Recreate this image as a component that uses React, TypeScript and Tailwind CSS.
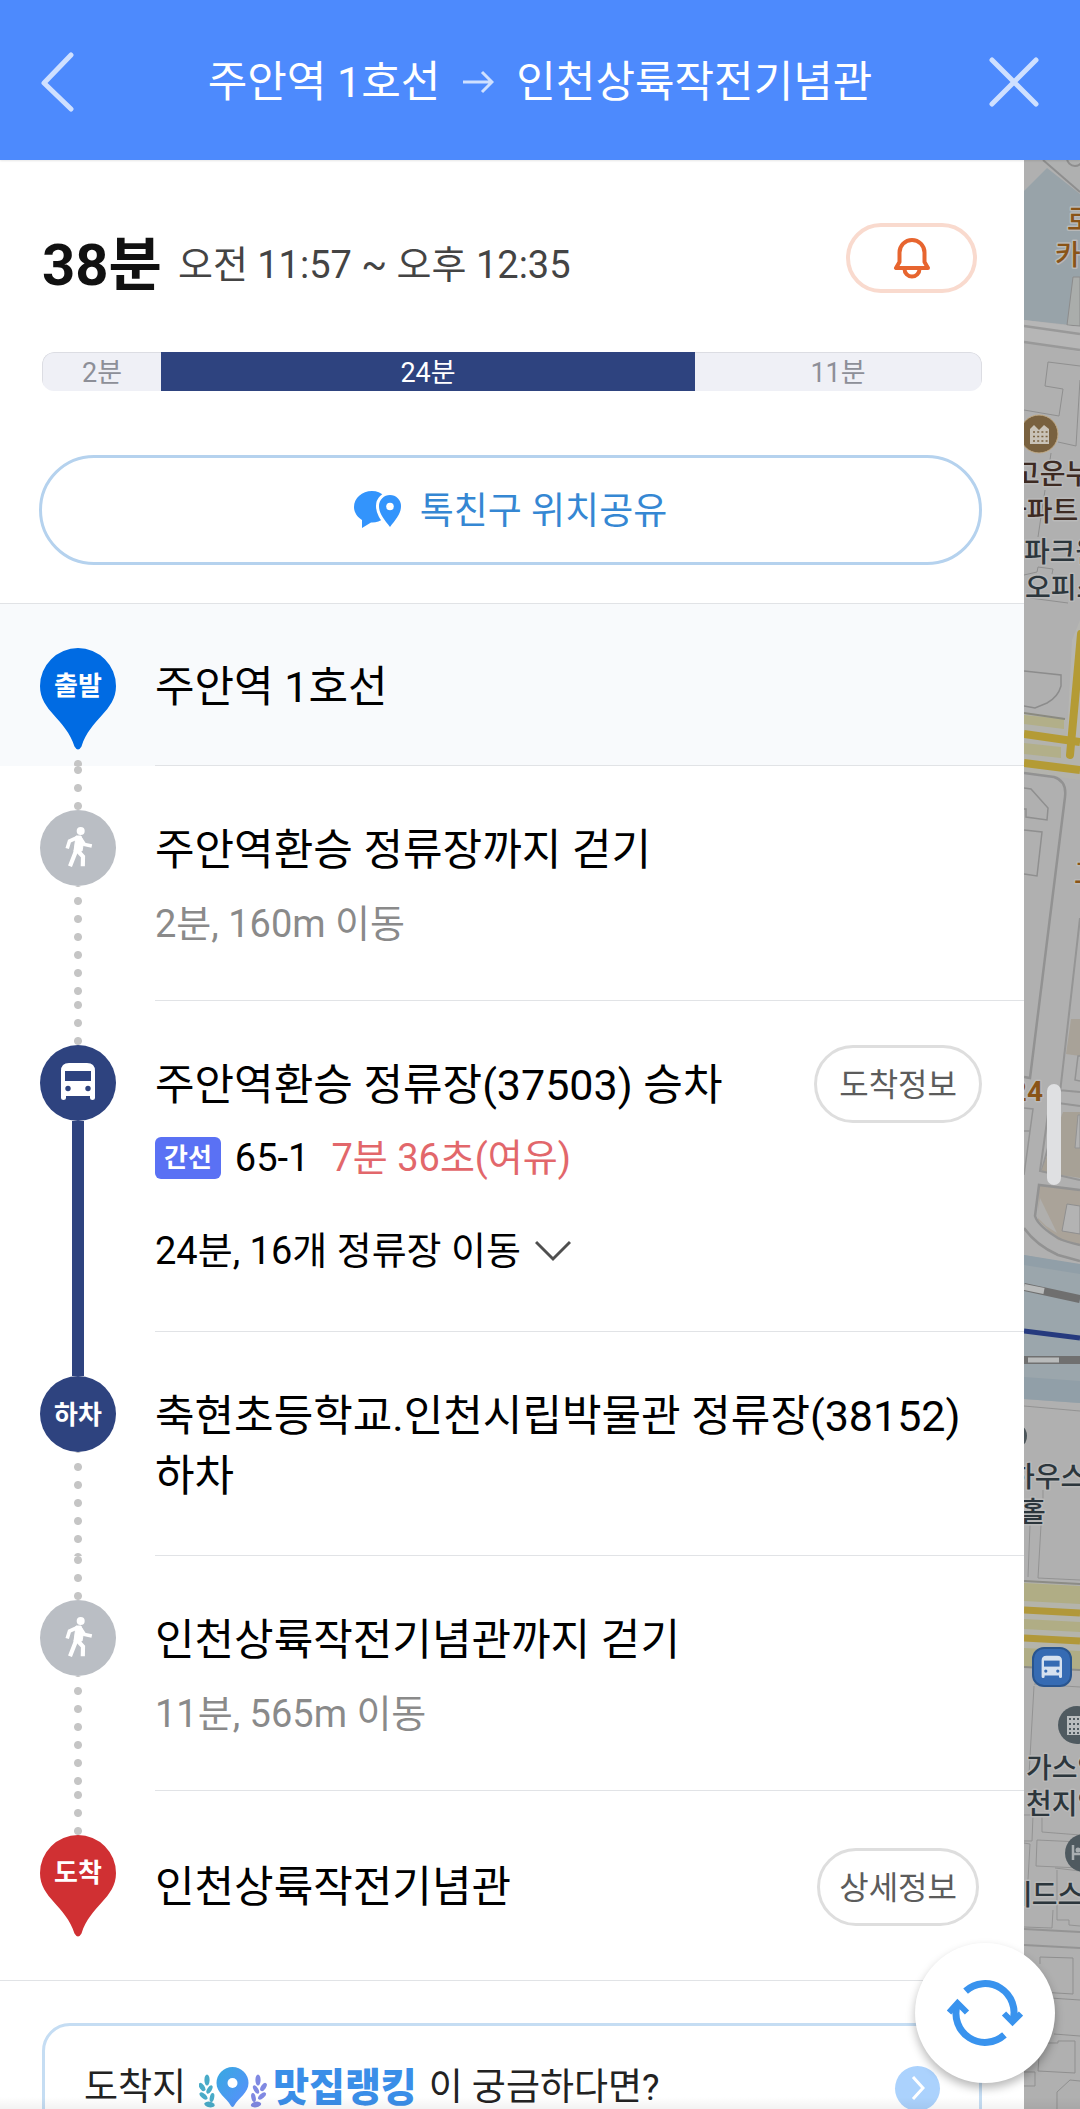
import React from 'react';

function WalkIcon() {
  return (
    <svg viewBox="0 0 76 76" className="size-[76px]" fill="none" stroke="#fff">
      <circle cx="40.7" cy="21" r="4" fill="#fff" stroke="none" />
      <path d="M36 26 h5 l2.5 7 l-1.5 8 h-8 z" fill="#fff" strokeWidth="1" />
      <path d="M27.2 38.5 L29.5 31 L37.5 27.5 M40.5 28.5 L44.5 34.5 L51.8 36" strokeWidth="3.6" />
      <path d="M36.5 38 L35 43.5 L30 56.2" strokeWidth="4.2" />
      <path d="M36.5 39.5 L43 46.5 L42.8 56.2" strokeWidth="4.2" />
    </svg>
  );
}

function BusShape({ cutout }: { cutout: string }) {
  return (
    <>
      <path
        d="M21 26 Q21 18 29 18 H47 Q55 18 55 26 V53 Q55 55 52.5 55 Q50 55 50 53 V51 H26 V53 Q26 55 23.5 55 Q21 55 21 53 Z"
        fill="#fff"
      />
      <rect x="25" y="26" width="26" height="10" fill={cutout} />
      <circle cx="28" cy="43.5" r="2.7" fill={cutout} />
      <circle cx="48" cy="43.5" r="2.7" fill={cutout} />
    </>
  );
}

function PinMarker({ label, color }: { label: string; color: string }) {
  return (
    <div className="relative h-[102px] w-[76px]">
      <svg viewBox="0 0 76 102" className="size-full">
        <path
          d="M38 0 A38 38 0 0 1 76 38 C76 63 50 71 41.5 98.5 Q38 104.5 34.5 98.5 C26 71 0 63 0 38 A38 38 0 0 1 38 0 Z"
          fill={color}
        />
      </svg>
      <span className="absolute inset-x-0 top-0 text-center text-[26px] leading-[76px] font-bold text-white">{label}</span>
    </div>
  );
}

type StepProps = {
  marker: React.ReactNode;
  before?: boolean;
  after?: 'dots' | 'tail' | 'bus';
  className?: string;
  bodyClass?: string;
  children: React.ReactNode;
};

const dots = 'w-2 bg-[radial-gradient(circle_at_4px_4px,#c5c5c5_3.5px,transparent_4.5px)] bg-[length:8px_18px] bg-repeat-y';

function Step({ marker, before = false, after, className = '', bodyClass = '', children }: StepProps) {
  return (
    <li className={`flex ${className}`}>
      <div className="flex w-[155px] shrink-0 flex-col items-center pr-[39px] pl-10">
        <div className={`h-11 shrink-0 ${before ? dots : ''}`} />
        {marker}
        {after === 'dots' && <div className={`flex-1 bg-[position:0_11px] ${dots}`} />}
        {after === 'tail' && <div className={`flex-1 bg-[position:0_10px] ${dots}`} />}
        {after === 'bus' && <div className="-mb-11 w-3 flex-1 bg-[#2e437f]" />}
      </div>
      <div className={`min-w-0 flex-1 border-b border-[#e1e3e6] ${bodyClass}`}>{children}</div>
    </li>
  );
}

function Round({ className, children }: { className: string; children: React.ReactNode }) {
  return (
    <div className={`relative flex size-[76px] shrink-0 items-center justify-center overflow-hidden rounded-full text-[26px] font-bold text-white ${className}`}>
      {children}
    </div>
  );
}

const title = 'text-[43px] leading-[60px] text-black';
const sub = 'text-[38px] leading-[50px]';
const pill = 'h-[78px] shrink-0 rounded-full border-[3px] border-[#dedede] bg-white pt-[2px] text-[32px] text-[#5c5c5c]';

function MapStrip() {
  return (
    <svg viewBox="1024 160 56 1949" preserveAspectRatio="xMinYMin slice" className="size-full" fill="none">
      <rect x="1024" y="160" width="56" height="1949" fill="#b0b0b0" />
      {/* plaza and north road */}
      <path d="M1024 191 L1047 168 L1080 194 V326 L1024 320 Z" fill="#98a3a9" />
      <path d="M1043 160 L1080 192 V160 Z" fill="#afb0b0" />
      <path d="M1043 160 L1080 192" stroke="#8e8e8e" strokeWidth="2" />
      <circle cx="1075" cy="158" r="8" stroke="#8e8e8e" strokeWidth="2" />
      <path d="M1073 277 H1080 V326 L1067 325 Z" fill="#aaadab" stroke="#8c8c8c" />
      <path d="M1024 320 L1080 327 V352 L1024 341 Z" fill="#b6b6b6" />
      <path d="M1024 326 L1080 334 M1024 342 L1080 350" stroke="#999" strokeWidth="2.5" />
      <path d="M1080 366 L1048 362 L1045 386 L1063 389 L1059 416 L1024 410 M1080 380 L1076 446 L1058 442 M1051 453 L1050 460 M1045 490 L1038 537 M1024 575 L1037 572 L1038 567 L1053 569 L1052 574 M1030 598 L1068 603" stroke="#8f8f8f" />
      {/* main road */}
      <path d="M1024 671 L1061 675 L1061 686 Q1058 697 1047 703 L1035 708 L1024 706" stroke="#8c8c8c" strokeWidth="1.5" />
      <path d="M1024 713 L1080 721 V780 L1024 772 Z" fill="#b3b3ad" />
      <path d="M1072 640 L1080 620 V740 L1067 738 Z" fill="#b6b6b2" />
      <path d="M1024 715 L1064 719 V729 L1024 724 Z M1024 743 L1061 747 V758 L1024 754 Z" fill="#b2af89" />
      <path d="M1024 713 L1065 719" stroke="#8a8a80" strokeWidth="2" />
      <path d="M1081 634 L1070 755" stroke="#b49b35" strokeWidth="8" strokeLinecap="round" />
      <path d="M1024 734 L1080 742 M1024 763 L1080 770" stroke="#b49b35" strokeWidth="8" />
      <path d="M1024 773 L1054 777 Q1067 781 1065 797 L1030 1078 L1024 1077" stroke="#929292" strokeWidth="2.5" />
      <path d="M1080 918 L1058 1110 L1042 1170 M1058 1090 L1080 1092 M1058 1103 L1080 1106" stroke="#959595" strokeWidth="2" />
      <path d="M1024 788 L1031 789 L1048 808 L1047 820 L1026 817 V809 H1024 M1024 830 L1042 832 L1037 876 L1024 874" stroke="#8f8f8f" strokeWidth="1.5" />
      <path d="M1071 1019 H1080 V1056 L1066 1054 Z" fill="#a8a298" />
      <path d="M1080 1056 H1078 L1075 1080 L1080 1081" stroke="#939393" strokeWidth="1.5" />
      <path d="M1024 1108 L1033 1109 L1024 1175 M1024 1131 H1030" stroke="#949494" strokeWidth="1.5" />
      <path d="M1063 1112 H1080 V1178 L1041 1172 Z" fill="#a7a196" />
      <path d="M1050 1100 L1040 1171 L1080 1180" stroke="#959595" strokeWidth="2" />
      <path d="M1078 1115 H1080 V1148 H1075 Z" fill="#b2b2b2" stroke="#939393" />
      {/* block by the railway */}
      <path d="M1039 1185 L1080 1190 V1245 L1058 1240 L1038 1220 Z" fill="#aaa399" />
      <path d="M1040 1198 L1057 1233 L1046 1226 L1037 1217 Z" fill="#b0afad" />
      <path d="M1067 1204 L1080 1206 V1234 L1062 1231 Z" fill="#b3b3b3" stroke="#8f8f8f" />
      <path d="M1080 1190 L1039 1185 L1035 1216 Q1038 1226 1058 1238 Q1066 1242 1080 1245 M1024 1228 Q1036 1245 1058 1255 L1080 1261" stroke="#929292" strokeWidth="2.5" />
      <path d="M1024 1255 L1080 1265 V1403 L1024 1399 Z" fill="#9ba6ac" />
      <path d="M1024 1255 L1080 1264 V1274 L1024 1265 Z M1024 1377 L1080 1381 V1403 L1024 1399 Z" fill="#919fa8" />
      <path d="M1024 1287 L1080 1299" stroke="#6f6f6f" strokeWidth="8" />
      <path d="M1024 1287 L1044 1291" stroke="#b9bbbb" strokeWidth="6" />
      <path d="M1024 1331 L1080 1338" stroke="#263a7e" strokeWidth="5" />
      <path d="M1024 1360 H1080" stroke="#707070" strokeWidth="8" />
      <path d="M1028 1360 H1059" stroke="#b9bbbb" strokeWidth="5" />
      <path d="M1024 1406 L1080 1411 M1030 1525 L1028 1577 M1041 1525 L1038 1578 L1080 1580 M1043 1490 V1500" stroke="#939393" />
      <ellipse cx="1022" cy="1436" rx="5" ry="9" fill="#4c555a" />
      {/* southern boulevard */}
      <path d="M1024 1582 L1080 1586 V1669 L1024 1668 Z" fill="#b4b4ab" />
      <path d="M1024 1583 L1080 1586 V1604 L1024 1601 Z M1024 1619 L1080 1622 V1632 L1024 1629 Z M1024 1648 L1080 1651 V1669 L1024 1667 Z" fill="#b0ad85" />
      <path d="M1024 1581 L1080 1584 M1024 1667 L1080 1670" stroke="#8c8c86" strokeWidth="2" />
      <path d="M1024 1610 L1080 1613 M1024 1638 L1080 1641" stroke="#b1983a" strokeWidth="7" />
      <path d="M1034 1686 L1029 1775 M1034 1684 L1080 1687 M1042 1815 V1832 L1080 1835 M1024 1815 H1033 L1032 1841 H1024 M1037 1840 L1080 1842 M1037 1840 L1036 1866 L1080 1868 M1024 1843 L1030 1844 L1028 1880 M1055 1868 L1080 1871 M1057 1870 V1920 H1069 V1925 L1080 1926 M1053 1910 L1052 1928 L1024 1927" stroke="#939393" />
      <path d="M1024 1929 L1080 1932 M1024 1945 L1080 1948" stroke="#949494" strokeWidth="2" />
      <path d="M1040 1957 L1073 1958 V1994 L1040 1992 M1040 1957 V1964 M1050 1998 L1080 2000 M1054 2034 L1080 2036 M1040 2043 H1058 V2041 L1075 2041 V2073 L1038 2071 Z M1024 2072 H1035 V2086 H1024 M1057 2109 V2092 L1070 2080 L1080 2081" stroke="#8f8f8f" />

      {/* place markers */}
      <circle cx="1039" cy="434" r="19" fill="#79613f" stroke="#c1aa86" />
      <path d="M1030 429 L1034 425 L1039 430 L1044 425 L1049 429 V444 H1030 Z" fill="#c9c3b8" />
      <path d="M1033 432 H1048 M1033 436.5 H1048 M1033 441 H1048" stroke="#79613f" strokeWidth="1.6" strokeDasharray="2 2.2" />
      <rect x="1033" y="1648" width="38" height="38" rx="11" fill="#366bb3" stroke="#29558f" strokeWidth="2" />
      <g transform="translate(1029 1645) scale(0.6)" opacity="0.8">
        <BusShape cutout="#366bb3" />
      </g>
      <circle cx="1077" cy="1725" r="19" fill="#4f5a60" />
      <rect x="1067" y="1716" width="20" height="19" fill="#b9bdbf" />
      <path d="M1069 1719 H1080 M1069 1724 H1080 M1069 1729 H1080 M1069 1733 H1080" stroke="#4f5a60" strokeWidth="2" strokeDasharray="2 2" />
      <circle cx="1084" cy="1853" r="19" fill="#4f5a60" />
      <path d="M1073 1845 V1860 M1073 1854 H1080" stroke="#a9aeb1" strokeWidth="2.5" />
      <circle cx="1078" cy="1850" r="2.5" fill="#a9aeb1" />

      {/* place names */}
      <g fontSize="28" fontWeight="500" stroke="#b9b9b9" strokeWidth="3" strokeLinejoin="round" paintOrder="stroke">
        <g fill="#8a5417">
          <text x="1067" y="230">로</text>
          <text x="1055" y="265">카</text>
          <text x="1043" y="1101" textAnchor="end" fontWeight="700">24</text>
          <text x="1074" y="884">고</text>
        </g>
        <g fill="#3d2a22">
          <text x="1014" y="484">고운누</text>
          <text x="1001" y="521">아파트</text>
        </g>
        <g fill="#2c363c">
          <text x="1024" y="562">파크원</text>
          <text x="1025" y="598">오피스</text>
          <text x="1009" y="1487">하우스</text>
          <text x="1020" y="1522">홀</text>
          <text x="1026" y="1778">가스안</text>
          <text x="1026" y="1814">천지역</text>
          <text x="1006" y="1905">레드스</text>
        </g>
      </g>
    </svg>
  );
}

export default function App() {
  return (
    <div className="relative flex h-screen flex-col overflow-hidden bg-white font-['Roboto','Noto_Sans_CJK_KR',sans-serif]" lang="ko">
      <header className="relative z-10 flex h-40 shrink-0 items-center justify-between bg-[#4d8afd] px-10 pt-1 shadow-[0_1px_2px_rgba(0,0,0,0.1)]">
        <button type="button" aria-label="뒤로" className="w-[52px]">
          <svg viewBox="0 0 34 60" className="h-[60px] w-[34px]" fill="none" stroke="#cfe0ff" strokeWidth="5" strokeLinecap="round" strokeLinejoin="round">
            <path d="M31 3 L4 31 L31 57" />
          </svg>
        </button>
        <h1 className="flex items-center text-[43px] leading-[60px] text-white">
          <span>주안역 1호선</span>
          <svg viewBox="0 0 32 24" className="mx-[22px] h-6 w-8" fill="none" stroke="#cfe0ff" strokeWidth="3">
            <path d="M1 12 H29 M20 2 L30 12 L20 22" />
          </svg>
          <span>인천상륙작전기념관</span>
        </h1>
        <button type="button" aria-label="닫기">
          <svg viewBox="0 0 52 52" className="size-[52px]" fill="none" stroke="#cfe0ff" strokeWidth="5" strokeLinecap="round">
            <path d="M4 4 L48 48 M48 4 L4 48" />
          </svg>
        </button>
      </header>

      <div className="flex min-h-0 flex-1">
        <main className="min-w-0 flex-1 overflow-hidden">
          <section className="border-b border-[#e1e3e6] px-[42px] pb-[38px]">
            <div className="flex h-[133px] items-center justify-between pt-[63px] pr-[5px]">
              <div className="flex items-center gap-4 pt-[14px]">
                <strong className="text-[58px] leading-[60px] font-bold text-[#111]">38분</strong>
                <span className="text-[38px] leading-[50px] text-[#444]">오전 11:57 ~ 오후 12:35</span>
              </div>
              <button type="button" aria-label="알림" className="flex h-[70px] w-[131px] items-center justify-center rounded-full border-4 border-[#f9dace]">
                <svg viewBox="0 0 38 42" className="h-[42px] w-[38px]" fill="none" stroke="#e7652f" strokeWidth="4" strokeLinejoin="round">
                  <path d="M3 31 H35 L31.5 25 V15.5 A12.5 12.5 0 0 0 6.5 15.5 V25 Z" />
                  <path d="M11.5 32 A7.5 7.5 0 0 0 26.5 32" />
                </svg>
              </button>
            </div>

            <div className="mt-[59px] grid h-[39px] grid-cols-[119fr_534fr_287fr] overflow-hidden rounded-xl text-center text-[27px] leading-10 text-[#8d8f98]">
              <span className="rounded-l-xl border border-r-0 border-[#dcdde3] bg-[#eff0f6]">2분</span>
              <span className="bg-[#2e437f] pt-px text-white">24분</span>
              <span className="rounded-r-xl border border-l-0 border-[#dcdde3] bg-[#eff0f6]">11분</span>
            </div>

            <button type="button" className="mt-16 -ml-[3px] flex h-[110px] w-[calc(100%+3px)] items-center justify-center gap-[18px] rounded-full border-[3px] border-[#b5d2ee] text-[37px] text-[#3587d3]">
              <svg viewBox="0 0 48 38" className="h-[38px] w-12">
                <path d="M18 0 C28 0 34 7 34 16 C34 26 27 32 17 31.5 L8 37 L8 29 C3 26 0 21 0 16 C0 7 8 0 18 0 Z" fill="#3394fc" />
                <path d="M36 4 A11 11 0 0 1 47 15 C47 23 42 28 36 36 C30 28 25 23 25 15 A11 11 0 0 1 36 4 Z" fill="#3394fc" stroke="#fff" strokeWidth="6" paintOrder="stroke" />
                <circle cx="36" cy="15.5" r="3.8" fill="#fff" />
              </svg>
              <span className="pt-1">톡친구 위치공유</span>
            </button>
          </section>

          <ol>
            <Step className="h-[162px] bg-[#f8fafc]" marker={<PinMarker label="출발" color="#006be3" />} after="tail" bodyClass="flex items-center pt-1">
              <h2 className={title}>주안역 1호선</h2>
            </Step>

            <Step before after="dots" marker={<Round className="bg-[#babec4]"><WalkIcon /></Round>} bodyClass="pt-[54px] pb-[51px]">
              <h2 className={title}>주안역환승 정류장까지 걷기</h2>
              <p className={`mt-[19px] text-[#8a8a8a] ${sub}`}>2분, 160m 이동</p>
            </Step>

            <Step
              before
              after="bus"
              marker={
                <Round className="bg-[#2e437f]">
                  <svg viewBox="0 0 76 76" className="size-full">
                    <BusShape cutout="#2e437f" />
                  </svg>
                </Round>
              }
              bodyClass="flex items-start justify-between pb-[55px]"
            >
              <div className="pt-[54px]">
                <h2 className={title}>주안역환승 정류장(37503) 승차</h2>
                <p className={`mt-[18px] flex items-center text-black ${sub}`}>
                  <span className="rounded-md bg-[#5a71f4] px-[9px] text-[26px] leading-[42px] font-bold text-white">간선</span>
                  <span className="ml-[14px]">65-1</span>
                  <span className="ml-[22px] text-[#e2676b]">7분 36초(여유)</span>
                </p>
                <button type="button" className={`mt-[43px] flex items-center gap-[14px] text-black ${sub}`}>
                  24분, 16개 정류장 이동
                  <svg viewBox="0 0 36 22" className="h-[22px] w-9" fill="none" stroke="#4f4f4f" strokeWidth="3">
                    <path d="M1 2 L18 19 L35 2" />
                  </svg>
                </button>
              </div>
              <button type="button" className={`mt-11 mr-[42px] px-[22px] ${pill}`}>도착정보</button>
            </Step>

            <Step after="dots" marker={<Round className="bg-[#2e437f] pt-[2px]">하차</Round>} bodyClass="pt-[54px] pr-10 pb-[49px]">
              <h2 className={`break-keep ${title}`}>축현초등학교.인천시립박물관 정류장(38152) 하차</h2>
            </Step>

            <Step before after="dots" marker={<Round className="bg-[#babec4]"><WalkIcon /></Round>} bodyClass="pt-[54px] pb-[51px]">
              <h2 className={title}>인천상륙작전기념관까지 걷기</h2>
              <p className={`mt-[19px] text-[#8a8a8a] ${sub}`}>11분, 565m 이동</p>
            </Step>

            <Step before className="h-[190px] border-b border-[#e1e3e6]" marker={<PinMarker label="도착" color="#d03033" />} bodyClass="flex items-center justify-between border-b-0 pt-[2px]">
              <h2 className={title}>인천상륙작전기념관</h2>
              <button type="button" className={`mr-[45px] px-[19px] ${pill}`}>상세정보</button>
            </Step>
          </ol>

          <a href="#ranking" className="mt-[42px] mr-[42px] ml-[42px] flex items-center justify-between rounded-[28px] border-[3px] border-[#c5ddf3] py-[34px] pr-[39px] pl-[39px] text-[37px] leading-[56px] text-[#222]">
            <span className="flex items-center">
              도착지
              <svg viewBox="0 0 68 42" className="mr-[6px] ml-[13px] h-[42px] w-[68px]">
                <defs>
                  <linearGradient id="pin" x1="0" y1="0" x2="1" y2="1">
                    <stop offset="0" stopColor="#36a9e0" />
                    <stop offset="1" stopColor="#5b8eff" />
                  </linearGradient>
                </defs>
                <path d="M33.5 0 A16 16 0 0 1 49.5 16 C49.5 26 40 30 35 39 Q33.5 41 32 39 C27 30 17.5 26 17.5 16 A16 16 0 0 1 33.5 0 Z" fill="url(#pin)" />
                <circle cx="33.5" cy="16" r="5" fill="#fff" />
                <g fill="#49abc8">
                  <ellipse cx="8" cy="13" rx="2.6" ry="5.5" />
                  <ellipse cx="3" cy="20" rx="2.4" ry="4.6" transform="rotate(-35 3 20)" />
                  <ellipse cx="10.5" cy="22.5" rx="2.2" ry="4.6" transform="rotate(32 10.5 22.5)" />
                  <ellipse cx="4.5" cy="29" rx="2.4" ry="4.8" transform="rotate(-50 4.5 29)" />
                  <ellipse cx="13" cy="30.5" rx="2.2" ry="4.6" transform="rotate(12 13 30.5)" />
                  <ellipse cx="10.5" cy="37.5" rx="5.2" ry="2.8" transform="rotate(10 10.5 37.5)" />
                </g>
                <g fill="#8089e2">
                  <ellipse cx="59" cy="13" rx="2.6" ry="5.5" />
                  <ellipse cx="64.5" cy="20" rx="2.4" ry="4.6" transform="rotate(35 64.5 20)" />
                  <ellipse cx="57" cy="22.5" rx="2.2" ry="4.6" transform="rotate(-32 57 22.5)" />
                  <ellipse cx="63" cy="29" rx="2.4" ry="4.8" transform="rotate(50 63 29)" />
                  <ellipse cx="54.5" cy="30.5" rx="2.2" ry="4.6" transform="rotate(-12 54.5 30.5)" />
                  <ellipse cx="57" cy="37.5" rx="5.2" ry="2.8" transform="rotate(-10 57 37.5)" />
                </g>
              </svg>
              <strong className="mr-3 text-[39px] font-black text-[#3a8ee8]">맛집랭킹</strong>
              이 궁금하다면?
            </span>
            <span className="flex size-[45px] items-center justify-center rounded-full bg-[#abd2fd]">
              <svg viewBox="0 0 14 24" className="h-6 w-[14px]" fill="none" stroke="#fff" strokeWidth="3">
                <path d="M2 1 L12 12 L2 23" />
              </svg>
            </span>
          </a>
        </main>

        <aside className="relative w-14 shrink-0 overflow-hidden bg-[#b0b0b0]">
          <MapStrip />
          <div className="absolute top-[924px] left-[23px] h-[101px] w-[14px] rounded-full bg-[#dfe0e2]" />
        </aside>
      </div>

      <div className="pointer-events-none absolute inset-x-0 bottom-0 h-3 bg-linear-to-t from-black/5 to-transparent" />
      <button
        type="button"
        aria-label="새로고침"
        className="absolute right-[25px] bottom-[26px] z-10 flex size-[140px] items-center justify-center rounded-full bg-white shadow-[0_5px_10px_rgba(0,0,0,0.28)]"
      >
        <svg viewBox="0 0 76 66" className="h-[66px] w-[76px]" fill="none" stroke="#3993ee" strokeWidth="7">
          <path d="M18.6 11.1 A29 29 0 0 1 65.8 41" />
          <path d="M57.4 54.9 A29 29 0 0 1 10.2 25" />
          <path d="M57 33.5 L65.5 42 L74 33.5" strokeWidth="6" />
          <path d="M2 32.5 L10.5 23 L20 32.5" strokeWidth="6" />
        </svg>
      </button>
    </div>
  );
}
